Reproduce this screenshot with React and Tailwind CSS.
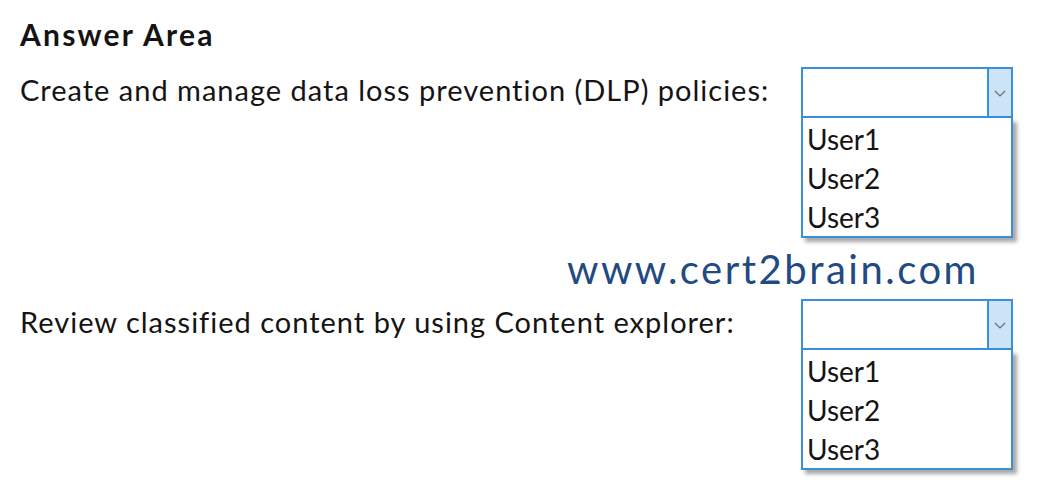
const USERS = ['User1', 'User2', 'User3']

function Dropdown() {
  return (
    <div className="w-[212px] shrink-0">
      <div className="flex h-[51px] border-2 border-[#3a8fd9] bg-white">
        <div className="flex-1" />
        <div className="flex w-[24px] items-center justify-center border-l-2 border-[#3a8fd9] bg-[#cce4f7] pt-[2px]">
          <svg width="12" height="7" viewBox="0 0 12 7">
            <path d="M1 1 L6 6 L11 1" fill="none" stroke="#6b6b6b" strokeWidth="1.2" />
          </svg>
        </div>
      </div>
      <div className="border-2 border-t-0 border-[#3a8fd9] bg-white pl-[4px] pt-[1px] shadow-[4px_4px_4px_rgba(0,0,0,0.35)]">
        {USERS.map(u => (
          <div key={u} className="h-[39px] text-[28px] leading-[40px] text-[#141414]">{u}</div>
        ))}
      </div>
    </div>
  )
}

function Row({ label }) {
  return (
    <div className="flex items-start">
      <div className="flex h-[51px] w-[781px] items-center pb-[6px] text-[29px] tracking-[1px] text-[#141414]">{label}</div>
      <Dropdown />
    </div>
  )
}

export default function App() {
  return (
    <div className="h-[492px] w-[1039px] bg-white pl-[20px] pt-[17px]" style={{ fontFamily: 'Lato, "Open Sans", sans-serif' }}>
      <h1 className="text-[30px] font-bold leading-[34px] tracking-[2.2px] text-[#141414]">Answer Area</h1>
      <div className="mt-[16px]">
        <Row label="Create and manage data loss prevention (DLP) policies:" />
      </div>
      <div className="flex h-[61px] items-center pl-[547px] text-[40px] tracking-[2.5px] text-[#1f4a82]">www.cert2brain.com</div>
      <Row label="Review classified content by using Content explorer:" />
    </div>
  )
}
